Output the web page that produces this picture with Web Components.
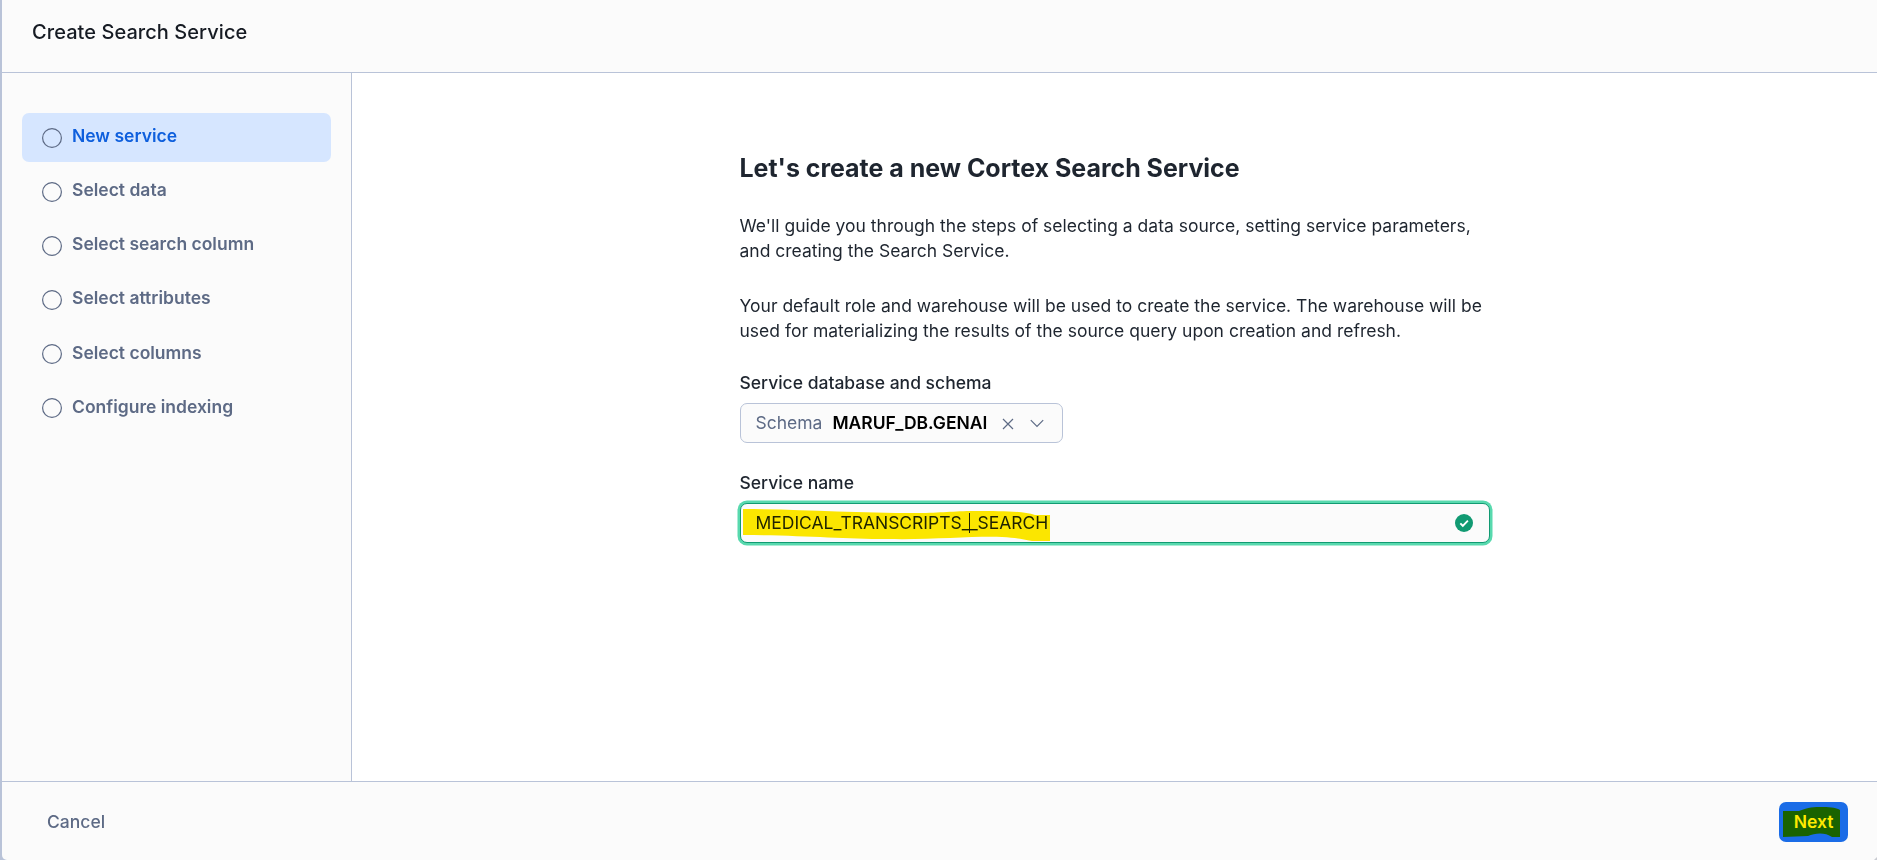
<!DOCTYPE html>
<html lang="en">
<head>
<meta charset="utf-8">
<title>Create Search Service</title>
<style>
html,body{margin:0;height:100%;overflow:hidden}
body{font-family:Inter,"Liberation Sans",sans-serif;font-size:17.5px;line-height:25px;color:#1e252f;background:#b9c3d8}
</style>
</head>
<body>
<wizard-shell>
  <span slot="title">Create Search Service</span>
  <wizard-step slot="steps" active>New service</wizard-step>
  <wizard-step slot="steps">Select data</wizard-step>
  <wizard-step slot="steps">Select search column</wizard-step>
  <wizard-step slot="steps">Select attributes</wizard-step>
  <wizard-step slot="steps" class="low">Select columns</wizard-step>
  <wizard-step slot="steps" class="low">Configure indexing</wizard-step>
  <service-intro>
    <span slot="heading">Let's create a new Cortex Search Service</span>
    <span slot="first">We'll guide you through the steps of selecting a data source, setting service parameters,<br>and creating the Search Service.</span>
    <span slot="second">Your default role and warehouse will be used to create the service. The warehouse will be<br>used for materializing the results of the source query upon creation and refresh.</span>
  </service-intro>
  <form-row label="Service database and schema"><schema-picker>MARUF_DB.GENAI</schema-picker></form-row>
  <form-row label="Service name"><name-field>MEDICAL_TRANSCRIPTS__SEARCH</name-field></form-row>
  <wizard-button slot="actions">Cancel</wizard-button>
  <wizard-button slot="actions" primary>Next</wizard-button>
</wizard-shell>
<script>
const define = (name, html) => customElements.define(name, class extends HTMLElement {
  constructor() {
    super();
    this.attachShadow({mode: 'open'}).innerHTML = html;
  }
  connectedCallback() {
    const l = this.shadowRoot.querySelector('[data-label]');
    if (l) l.textContent = this.getAttribute('label');
  }
});

define('wizard-shell', `<style>
:host{display:grid;position:relative;grid-template-rows:73px 1fr 79px;height:860px;box-sizing:border-box;margin-left:2px;background:#fbfbfb;border-bottom-left-radius:5px;overflow:hidden}
header{border-bottom:1px solid #b9c3d8;box-sizing:border-box;padding:20px 30px;font-size:20px;font-weight:500;letter-spacing:.06px;color:#161b23}
.body{display:grid;grid-template-columns:350px 1fr;min-height:0}
nav{border-right:1px solid #b9c3d8;box-sizing:border-box;padding:40px 20px;display:flex;flex-direction:column;gap:5px}
main{background:#fff;display:flex;justify-content:center;padding-top:80px;box-sizing:border-box}
.content{width:750px}
footer{border-top:1px solid #b9c3d8;box-sizing:border-box;display:flex;justify-content:space-between;align-items:flex-start;padding:20px 29px 0 30px}
.grip{position:absolute;right:0;bottom:0;width:3px;height:3px;background:linear-gradient(135deg,#fbfbfb 40%,#c9cbd2 60%)}
</style>
<header><slot name="title"></slot></header>
<div class="body"><nav><slot name="steps"></slot></nav><main><div class="content"><slot></slot></div></main></div>
<footer><slot name="actions"></slot></footer><i class="grip"></i>`);

define('wizard-step', `<style>
:host{display:flex;box-sizing:border-box;height:49px;padding:10px 20px;gap:10px;border-radius:7px;color:#5d6a85;font-weight:600}
:host([active]){background:#d6e6ff;color:#0e5fdd}
svg{width:20px;height:20px;margin-top:5px;flex:none}
.t{white-space:nowrap}
:host(.low) .t{padding-top:1px}
</style><svg viewBox="0 0 20 20"><circle cx="10" cy="10" r="9.4" fill="none" stroke="#5d6a85" stroke-width="1.2"/></svg><span class="t"><slot></slot></span>`);

define('service-intro', `<style>
:host{display:block}
h1{margin:0;font-size:25px;line-height:30px;font-weight:700;white-space:nowrap;letter-spacing:-.02px}
p{margin:30px 0 0;white-space:nowrap}
</style><h1><slot name="heading"></slot></h1><p><slot name="first"></slot></p><p><slot name="second"></slot></p>`);

define('form-row', `<style>
:host{display:block;margin-top:27px}
label{display:block;font-weight:500;margin-bottom:8px}
</style><label data-label></label><slot></slot>`);

define('schema-picker', `<style>
:host{display:flex;align-items:center;width:323px;height:40px;box-sizing:border-box;border:1px solid #b9c3d8;border-radius:7px;background:#fbfbfb;padding-left:15px;white-space:nowrap}
.k,.v{padding-bottom:2px}
.k{color:#5d6a85;margin-right:10px}
.v{font-weight:600;color:#000;letter-spacing:-.03px}
svg{fill:none;stroke:#5d6a85;stroke-width:1.2;flex:none}
</style><span class="k">Schema</span><span class="v"><slot></slot></span>
<svg style="margin-left:15px;margin-top:2px" width="12" height="12" viewBox="0 0 12 12"><path d="M1 1L11 11M11 1L1 11"/></svg>
<svg style="margin-left:16px;margin-top:1px" width="14" height="9" viewBox="0 0 14 9"><path d="M.8 1.2L7 7.4L13.2 1.2"/></svg>`);

define('name-field', `<style>
:host{display:flex;position:relative;align-items:center;justify-content:space-between;height:40px;box-sizing:border-box;border:1px solid #119a72;border-radius:7px;background:#fbfbfb;box-shadow:0 0 0 2.5px #58d9ae;padding:0 16px 0 15px}
.t{padding-bottom:2px;letter-spacing:-.02px}
.caret{position:absolute;left:228px;top:9px;width:1px;height:20px;background:#1e252f}
.mark{position:absolute;left:1px;top:4px;mix-blend-mode:multiply}
</style><span class="t"><slot></slot></span><i class="caret"></i>
<svg width="18" height="18" viewBox="0 0 18 18"><circle cx="9" cy="9" r="9" fill="#119a72"/><path d="M5.3 9.4L7.8 11.8L12.9 6.7" fill="none" stroke="#fff" stroke-width="1.9"/></svg>
<svg class="mark" width="310" height="36" viewBox="0 0 310 36"><path fill="#ffea00" d="M1 1C60 1 110 5 175 5C200 5 210 3 233 3C260 3 280 3 293 7H308V33H290C280 31 275 30 260 29C230 28 190 32 145 31C100 31 60 27 1 27Z"/></svg>`);

define('wizard-button', `<style>
:host{display:flex;position:relative;align-items:center;justify-content:center;box-sizing:border-box;height:40px;padding:0 15px 2px 15px;font-weight:500;color:#5d6a85}
:host([primary]){width:69px;padding:0 0 2px;background:#1a6ce7;color:#fff;border-radius:7px;font-weight:600}
svg{display:none;position:absolute;left:4px;top:5px;mix-blend-mode:multiply}
:host([primary]) svg{display:block}
</style><slot></slot><svg width="58" height="31" viewBox="0 0 58 31"><path fill="#ffea00" d="M0 4H16C26 0 30 0 40 0C49 0 54 1 57 3V30H49C42 25 32 26 25 29C17 29 8 30 0 30Z"/></svg>`);
</script>
</body>
</html>
